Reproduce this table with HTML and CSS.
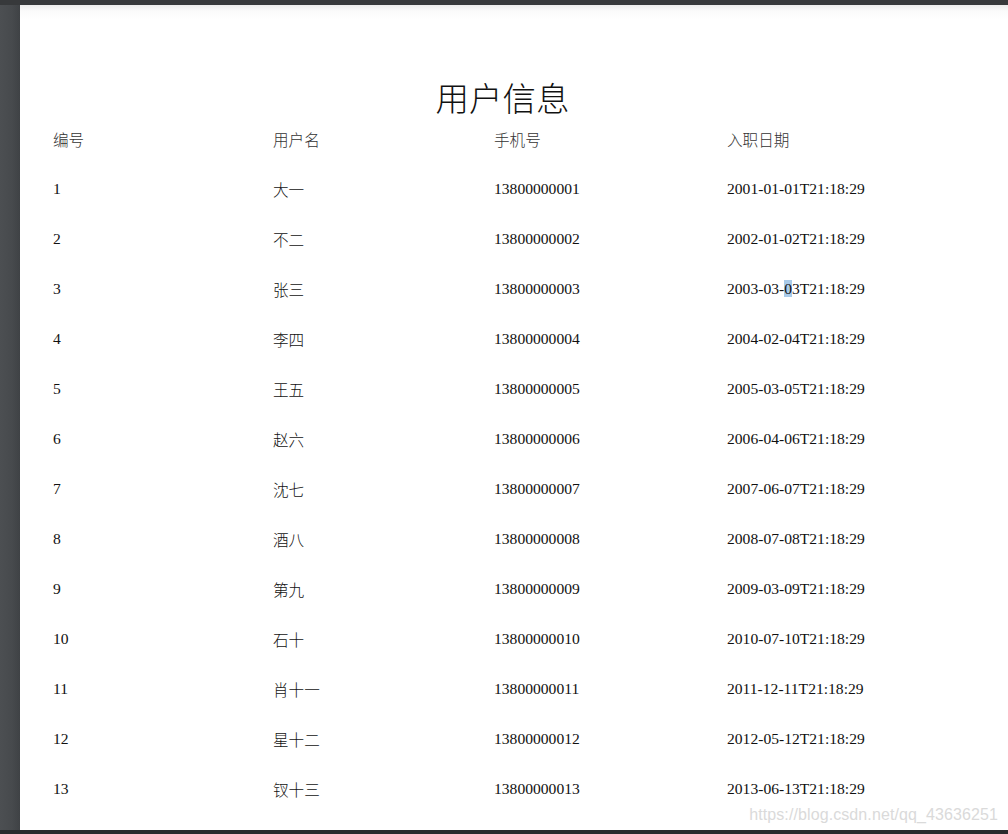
FILE: index.html
```html
<!DOCTYPE html>
<html lang="zh-CN">
<head>
<meta charset="utf-8">
<title>用户信息</title>
<link rel="stylesheet" href="styles.css">
</head>
<body>
<div class="topbar"></div>
<div class="viewer">
  <div class="gutter"></div>
  <div class="page">
    <h1 class="title">用户信息</h1>
    <div class="table">
      <div class="row head"><span>编号</span><span>用户名</span><span>手机号</span><span>入职日期</span></div>
      <div class="row"><span>1</span><span>大一</span><span>13800000001</span><span>2001-01-01T21:18:29</span></div>
      <div class="row"><span>2</span><span>不二</span><span>13800000002</span><span>2002-01-02T21:18:29</span></div>
      <div class="row"><span>3</span><span>张三</span><span>13800000003</span><span>2003-03-<span class="sel">0</span>3T21:18:29</span></div>
      <div class="row"><span>4</span><span>李四</span><span>13800000004</span><span>2004-02-04T21:18:29</span></div>
      <div class="row"><span>5</span><span>王五</span><span>13800000005</span><span>2005-03-05T21:18:29</span></div>
      <div class="row"><span>6</span><span>赵六</span><span>13800000006</span><span>2006-04-06T21:18:29</span></div>
      <div class="row"><span>7</span><span>沈七</span><span>13800000007</span><span>2007-06-07T21:18:29</span></div>
      <div class="row"><span>8</span><span>酒八</span><span>13800000008</span><span>2008-07-08T21:18:29</span></div>
      <div class="row"><span>9</span><span>第九</span><span>13800000009</span><span>2009-03-09T21:18:29</span></div>
      <div class="row"><span>10</span><span>石十</span><span>13800000010</span><span>2010-07-10T21:18:29</span></div>
      <div class="row"><span>11</span><span>肖十一</span><span>13800000011</span><span>2011-12-11T21:18:29</span></div>
      <div class="row"><span>12</span><span>星十二</span><span>13800000012</span><span>2012-05-12T21:18:29</span></div>
      <div class="row"><span>13</span><span>钗十三</span><span>13800000013</span><span>2013-06-13T21:18:29</span></div>
    </div>
    <div class="watermark">https://blog.csdn.net/qq_43636251</div>
  </div>
</div>
<div class="bottombar"></div>
</body>
</html>
```

FILE: styles.css
```css
* { box-sizing: border-box; }
html, body { margin: 0; padding: 0; }
body {
  width: 1008px;
  height: 834px;
  overflow: hidden;
  background: #46494c;
  font-family: "Liberation Serif", "Noto Sans CJK SC", serif;
  color: #111;
}
.topbar {
  height: 5px;
  background: #37393b;
}
.viewer {
  display: flex;
  height: 825px;
}
.gutter {
  width: 20px;
  background: linear-gradient(to right, #4c4f52 0%, #474a4d 60%, #3f4245 100%);
}
.page {
  position: relative;
  flex: 1;
  background: linear-gradient(to bottom, #ececec 0px, #fbfbfb 6px, #ffffff 14px);
  padding: 72px 0 0 33px;
  overflow: hidden;
}
.title {
  margin: 0 0 2px 0;
  padding-right: 56px;
  text-align: center;
  font-family: "Noto Sans CJK SC", sans-serif;
  font-weight: 300;
  font-size: 33.5px;
  line-height: 40px;
  color: #111;
}
.table {
  display: flex;
  flex-direction: column;
}
.row {
  display: grid;
  grid-template-columns: 220px 221px 233px 1fr;
  height: 50px;
  align-items: center;
  font-size: 15.6px;
  font-weight: 300;
  color: #111;
}
.row.head {
  height: 40px;
  margin-bottom: 5px;
  color: #333;
}
.row span {
  white-space: nowrap;
}
.sel {
  background: #a9cbe9;
}
.watermark {
  position: absolute;
  right: 10px;
  bottom: 6px;
  font-family: "Liberation Sans", sans-serif;
  font-size: 16px;
  color: #dadada;
  letter-spacing: 0.1px;
}
.bottombar {
  height: 4px;
  background: #2a2b2d;
}
```
